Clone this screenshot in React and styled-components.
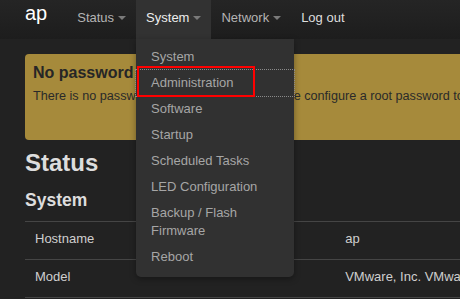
import React from "react";
import styled, { createGlobalStyle } from "styled-components";

const menu = [
  "System",
  "Administration",
  "Software",
  "Startup",
  "Scheduled Tasks",
  "LED Configuration",
  "Backup / Flash Firmware",
  "Reboot",
];

const tabs = [
  { label: "Status", caret: true },
  { label: "System", caret: true, active: true },
  { label: "Network", caret: true },
  { label: "Log out" },
];

const rows = [
  ["Hostname", "ap"],
  ["Model", "VMware, Inc. VMware Virtual Platform"],
];

const App = () => {
  return (
    <>
      <GlobalStyle />
      <Page>
        <Navbar>
          <Brand>ap</Brand>
          <NavList>
            {tabs.map((tab) => (
              <NavItem key={tab.label} active={tab.active}>
                <NavLink active={tab.active} plain={!tab.caret}>
                  {tab.label}
                  {tab.caret && <Caret />}
                </NavLink>
                {tab.active && (
                  <Dropdown>
                    {menu.map((item) => (
                      <DropItem key={item} focused={item === "Administration"}>
                        {item}
                        {item === "Administration" && <Marker />}
                      </DropItem>
                    ))}
                  </Dropdown>
                )}
              </NavItem>
            ))}
          </NavList>
        </Navbar>

        <Main>
          <Alert>
            <AlertTitle>No password set!</AlertTitle>
            <AlertText>
              There is no password set on this device. Please configure a root
              password to protect the web interface and enable SSH.
            </AlertText>
            <AlertActions>
              <AlertButton>Go to password configuration...</AlertButton>
            </AlertActions>
          </Alert>

          <PageTitle>Status</PageTitle>
          <SectionTitle>System</SectionTitle>

          <Table>
            <tbody>
              {rows.map(([key, value]) => (
                <tr key={key}>
                  <Cell first>{key}</Cell>
                  <Cell>{value}</Cell>
                </tr>
              ))}
            </tbody>
          </Table>
        </Main>
      </Page>
    </>
  );
};

const GlobalStyle = createGlobalStyle`
  html, body {
    margin: 0;
    padding: 0;
    overflow: hidden;
    background: #222;
  }
  body {
    font-family: "Liberation Sans", Arial, sans-serif;
    font-size: 13px;
    color: #ccc;
  }
`;

const Page = styled.div`
  width: 990px;
`;

const Navbar = styled.header`
  display: flex;
  align-items: flex-start;
  height: 39px;
  padding-left: 25px;
  background: linear-gradient(to bottom, #252525, #1d1d1d);
`;

const Brand = styled.div`
  font-size: 20px;
  line-height: 26px;
  color: #fff;
  padding-right: 20px;
`;

const NavList = styled.ul`
  display: flex;
  margin: 0;
  padding: 0;
  list-style: none;
`;

const NavItem = styled.li`
  position: relative;
  background: ${({ active }) => (active ? "#323232" : "transparent")};
`;

const NavLink = styled.span`
  display: flex;
  align-items: center;
  height: 39px;
  box-sizing: border-box;
  padding: 8px 10px 12px;
  line-height: 19px;
  color: ${({ active, plain }) => (active ? "#eee" : plain ? "#ddd" : "#b4b4b4")};
`;

const Caret = styled.span`
  width: 0;
  height: 0;
  margin-left: 4px;
  margin-top: 1px;
  border-left: 4px solid transparent;
  border-right: 4px solid transparent;
  border-top: 4px solid #7a7a7a;
`;

const Dropdown = styled.ul`
  position: absolute;
  top: 100%;
  left: 0;
  z-index: 10;
  width: 158px;
  margin: 0;
  padding: 5px 0 7px;
  list-style: none;
  background: #313131;
  border-radius: 0 0 5px 5px;
  box-shadow: 0 2px 6px rgba(0, 0, 0, 0.35);
`;

const DropItem = styled.li`
  position: relative;
  padding: 4px 15px;
  line-height: 18px;
  color: #a6a6a6;
  outline: ${({ focused }) => (focused ? "1px dotted #8a8a8a" : "none")};
  outline-offset: 0;
`;

const Marker = styled.span`
  position: absolute;
  top: -4px;
  left: 1px;
  width: 118px;
  height: 31px;
  box-sizing: border-box;
  border: 2px solid #f00;
`;

const Main = styled.main`
  padding: 15px 25px 0;
`;

const Alert = styled.div`
  box-sizing: border-box;
  padding: 9px 8px;
  background: #a68a3b;
  border-radius: 4px;
  color: #2a2a2a;
`;

const AlertTitle = styled.h4`
  margin: 0 0 4px;
  font-size: 16px;
  line-height: 20px;
  font-weight: bold;
  color: #262626;
`;

const AlertText = styled.p`
  margin: 0;
  font-size: 12.65px;
  line-height: 18px;
`;

const AlertActions = styled.div`
  display: flex;
  justify-content: flex-end;
  height: 26px;
`;

const AlertButton = styled.span`
  padding: 4px 10px;
  line-height: 18px;
  color: #ddd;
`;

const PageTitle = styled.h2`
  margin: 9px 0 0;
  font-size: 24px;
  line-height: 28px;
  font-weight: bold;
  color: #ddd;
`;

const SectionTitle = styled.h3`
  margin: 12px 0 0;
  font-size: 17.5px;
  line-height: 22px;
  font-weight: bold;
  color: #ddd;
`;

const Table = styled.table`
  width: 940px;
  margin-top: 10px;
  border-collapse: collapse;
`;

const Cell = styled.td`
  width: ${({ first }) => (first ? "33%" : "auto")};
  padding: 8px 10px 11px;
  line-height: 18px;
  border-top: 1px solid #454545;
  border-bottom: 1px solid #454545;
  color: #cfcfcf;
  text-align: left;
  vertical-align: top;
`;

export default App;
